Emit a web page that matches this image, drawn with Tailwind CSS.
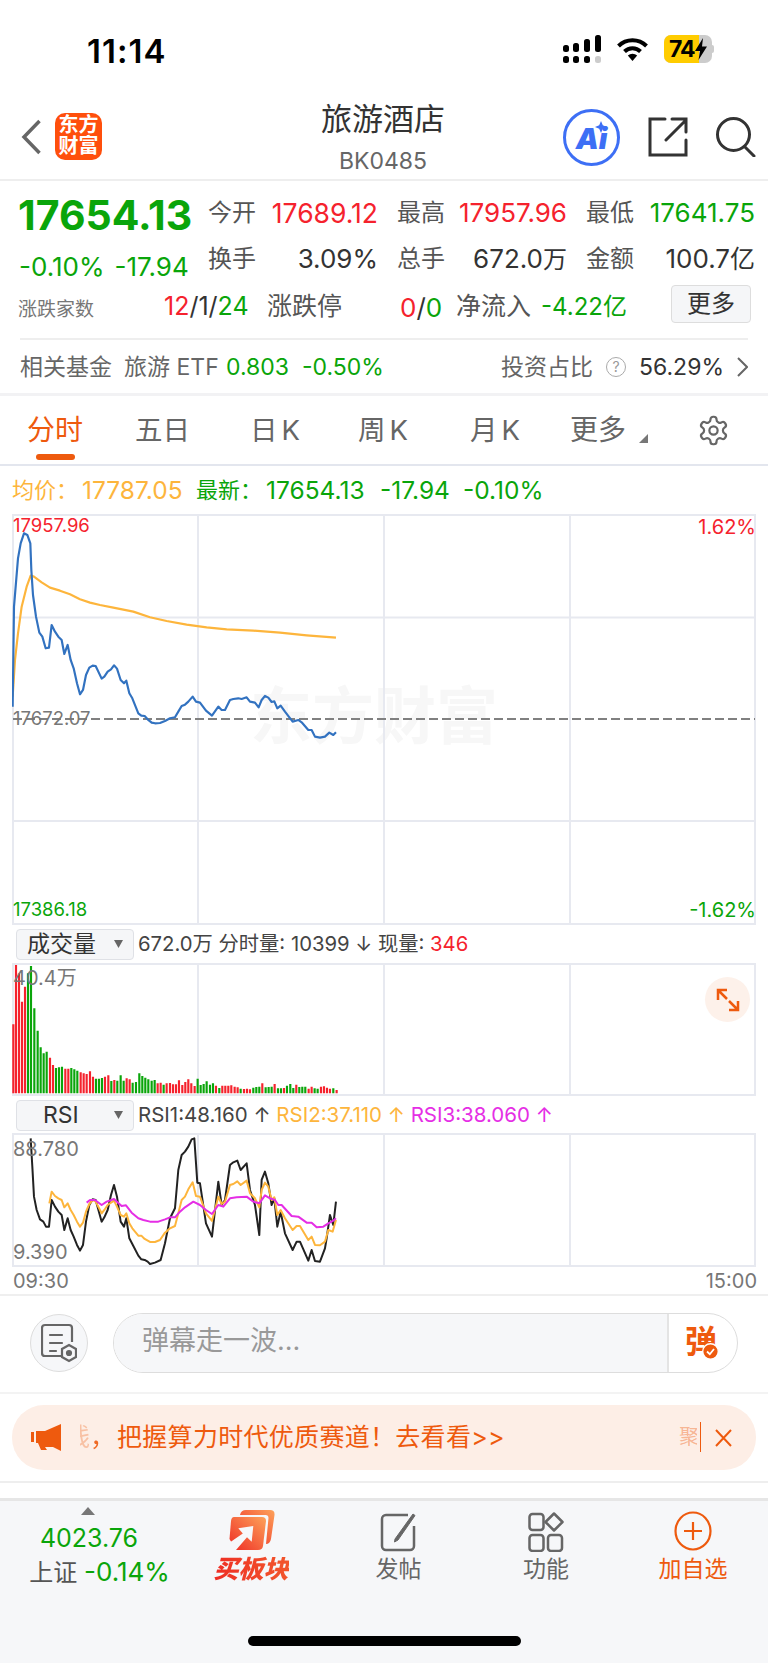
<!DOCTYPE html>
<html lang="zh"><head><meta charset="utf-8"><script src="https://cdn.jsdelivr.net/npm/@tailwindcss/browser@4"></script></head>
<body class="bg-white">
<div class="w-[768px] h-[1663px] overflow-hidden flex flex-col bg-white text-[#333] font-['Inter','Noto_Sans_CJK_SC',sans-serif]">

<!-- status bar -->
<div class="h-[101px] shrink-0 flex items-start pt-[32px] pl-[87px] pr-[54px] justify-between">
  <span class="text-[33px] leading-[38px] font-semibold text-black tracking-[1px]">11:14</span>
  <div class="flex items-center gap-[15px] pt-[5px] h-[28px]">
    <svg width="38" height="28" viewBox="0 0 38 28" fill="#000"><rect x="0" y="10" width="6" height="7" rx="2.5"/><rect x="0" y="21" width="6" height="7" rx="2.5"/><rect x="10" y="8" width="6" height="9" rx="2.5"/><rect x="10" y="21" width="6" height="7" rx="2.5"/><rect x="21" y="4" width="6" height="13" rx="2.5"/><rect x="21" y="21" width="6" height="7" rx="2.5"/><rect x="32" y="0" width="6" height="17" rx="2.5"/><rect x="32" y="21" width="6" height="7" rx="2.5" fill="#ccc"/></svg>
    <svg width="33" height="24" viewBox="0 0 33 24" fill="none" stroke="#000" stroke-width="4"><path d="M2.5 9A20 20 0 0 1 30.5 9"/><path d="M8.5 14.5A11.500 11.500 0 0 1 24.500 14.500"/><path d="M16.500 24L11.800 18.500A7 7 0 0 1 21.200 18.500Z" fill="#000" stroke="none"/></svg>
    <div class="relative w-[50px] h-[28px]">
      <div class="absolute inset-y-0 left-0 w-[48px] rounded-[7px] bg-[#ccc] overflow-hidden"><div class="h-full w-[35px] bg-[#ffcc00]"></div></div>
      <div class="absolute right-0 top-[10px] w-[2px] h-[8px] rounded-r-full bg-[#ccc]"></div>
      <span class="absolute left-[5px] top-0 text-[23px] leading-[28px] font-bold text-black tracking-[-1px]">74</span>
      <svg class="absolute left-[30px] top-[3px]" width="14" height="22" viewBox="0 0 14 22"><path d="M9 0L1 13H6L4.500 22L13 8.500H8Z" fill="#000"/></svg>
    </div>
  </div>
</div>

<!-- nav -->
<div class="relative h-[80px] shrink-0 flex items-center border-b-2 border-[#eeeeee]">
  <svg class="ml-[21px] mt-[-6px]" width="20" height="36" viewBox="0 0 20 36" fill="none" stroke="#666" stroke-width="3.500"><path d="M18.500 2L3 18L18.500 34"/></svg>
  <div class="ml-[14px] mt-[-8px] w-[47px] h-[47px] rounded-[10px] bg-[#ff4f0c] text-white text-[20px] leading-[21px] font-bold text-center pt-[2px]">东方<br>财富</div>
  <div class="absolute left-[302px] top-0 w-[162px] text-center text-[31px] leading-[36px] text-[#333]">旅游酒店</div>
  <div class="absolute left-[302px] top-[47px] w-[162px] text-center text-[23px] leading-[26px] text-[#666]">BK0485</div>
  <div class="ml-auto mr-[12px] flex items-center gap-[28px] mt-[-6px]">
    <div class="relative w-[57px] h-[57px] rounded-full border-[3px] border-[#3d6ff5] flex items-center justify-center text-[29px] font-black text-[#3d6ff5] leading-none italic pt-[3px]">Ai<svg class="absolute right-[10px] top-[9px]" width="12" height="12" viewBox="0 0 10 10"><path d="M5 0L6.500 3.500L10 5L6.500 6.500L5 10L3.500 6.500L0 5L3.500 3.500Z" fill="#3d6ff5"/></svg></div>
    <svg width="40" height="40" viewBox="0 0 40 40" fill="none" stroke="#333" stroke-width="3" stroke-linecap="round"><path d="M17 2H2V38H38V23"/><path d="M18 23L38 3M24 2H38V15"/></svg>
    <svg width="40" height="40" viewBox="0 0 40 40" fill="none" stroke="#333" stroke-width="3" stroke-linecap="round"><circle cx="17.500" cy="17.500" r="16"/><path d="M29 30L38 39"/></svg>
  </div>
</div>

<!-- quote -->
<div class="h-[215px] shrink-0 relative flex flex-col border-b-[3px] border-[#f2f2f4]">
  <div class="flex pl-[18px] h-[60px]">
    <div class="w-[190px] text-[41px] leading-[68px] font-bold text-[#0aa50a]">17654.13</div>
    <div class="flex gap-[19px] text-[24px] leading-[64px]">
      <div class="w-[170px] flex justify-between"><span class="text-[#555]">今开</span><span class="text-[26.500px] text-[#f5222d]">17689.12</span></div>
      <div class="w-[170px] flex justify-between"><span class="text-[#555]">最高</span><span class="text-[26px] text-[#f5222d]">17957.96</span></div>
      <div class="w-[169px] flex justify-between"><span class="text-[#555]">最低</span><span class="text-[26px] text-[#0aa50a]">17641.75</span></div>
    </div>
  </div>
  <div class="flex pl-[19px] h-[46px] items-start">
    <div class="w-[189px] flex gap-[10px] text-[26px] leading-[52px] text-[#0aa50a]"><span>-0.10%</span><span>-17.94</span></div>
    <div class="flex gap-[19px] text-[24px] leading-[36px]">
      <div class="w-[170px] flex justify-between"><span class="text-[#555]">换手</span><span class="text-[26px]">3.09%</span></div>
      <div class="w-[170px] flex justify-between"><span class="text-[#555]">总手</span><span class="text-[26px]">672.0<span class="text-[24px]">万</span></span></div>
      <div class="w-[169px] flex justify-between"><span class="text-[#555]">金额</span><span class="text-[26px]">100.7<span class="text-[25px]">亿</span></span></div>
    </div>
  </div>
  <div class="relative flex items-center pl-[18px] h-[40px] text-[25px] text-[#555]">
    <span class="w-[146px] text-[19px] pt-[6px] text-[#777]">涨跌家数</span>
    <span class="w-[103px] text-[25px]"><span class="text-[#f5222d]">12</span><span class="text-[#333]">/1/</span><span class="text-[#0aa50a]">24</span></span>
    <span class="w-[133px]">涨跌停</span>
    <span class="w-[56px] text-[26px]"><span class="text-[#f5222d]">0</span><span class="text-[#333]">/</span><span class="text-[#0aa50a]">0</span></span>
    <span class="w-[85px]">净流入</span>
    <span class="text-[#0aa50a] text-[24px]">-4.22亿</span>
    <div class="absolute left-[671px] top-[-2px] w-[80px] h-[38px] bg-[#f5f6f8] border border-[#dddddd] rounded-[4px] text-center text-[#333] text-[24px] leading-[36px]">更多</div>
  </div>
  <div class="h-[2px] mx-[20px] mt-[11px] bg-[#eeeeee] shrink-0"></div>
  <div class="flex items-center pl-[20px] pr-[20px] flex-1 text-[23px] text-[#666] pt-[1px]">
    <span class="w-[104px]">相关基金</span><span class="w-[102px]">旅游 ETF</span>
    <span class="w-[76px] text-[#0aa50a]">0.803</span><span class="text-[#0aa50a]">-0.50%</span>
    <span class="ml-auto">投资占比</span>
    <span class="ml-[13px] w-[20px] h-[20px] rounded-full border border-[#aaa] text-[14px] leading-[18px] text-center text-[#999]">?</span>
    <span class="ml-[13px] text-[#333]">56.29%</span>
    <svg class="ml-[13px]" width="11" height="20" viewBox="0 0 11 20" fill="none" stroke="#666" stroke-width="2"><path d="M1 1L10 10L1 19"/></svg>
  </div>
</div>

<!-- tabs -->
<div class="relative h-[70px] shrink-0 border-b-2 border-[#e3e6ee] text-[27.500px] text-[#666] leading-[68px]">
  <div class="flex h-[68px]">
    <span class="w-[135px] pl-[27px] text-[#ee5a0e] text-[28px]">分时</span>
    <span class="w-[115px]">五日</span>
    <span class="w-[108px] tracking-[4px]">日K</span>
    <span class="w-[112px] tracking-[4px]">周K</span>
    <span class="w-[100px] tracking-[4px]">月K</span>
    <span class="w-[70px] text-[28px]">更多</span>
  </div>
  <div class="absolute left-[36px] top-[58px] w-[39px] h-[6px] rounded-full bg-[#ee5a0e]"></div>
  <svg class="absolute left-[638px] top-[37px]" width="10" height="10" viewBox="0 0 10 10"><path d="M10 1V10H1Z" fill="#777"/></svg>
  <svg class="absolute left-[697px] top-[18px]" width="33" height="33" viewBox="0 0 24 24" fill="none" stroke="#666" stroke-width="1.600" stroke-linejoin="round"><path d="M12.220 2h-.44a2 2 0 0 0-2 2v.18a2 2 0 0 1-1 1.730l-.43.25a2 2 0 0 1-2 0l-.15-.08a2 2 0 0 0-2.730.73l-.22.38a2 2 0 0 0 .73 2.730l.15.1a2 2 0 0 1 1 1.720v.51a2 2 0 0 1-1 1.740l-.15.09a2 2 0 0 0-.73 2.730l.22.38a2 2 0 0 0 2.730.73l.15-.08a2 2 0 0 1 2 0l.43.25a2 2 0 0 1 1 1.730V20a2 2 0 0 0 2 2h.44a2 2 0 0 0 2-2v-.18a2 2 0 0 1 1-1.730l.43-.25a2 2 0 0 1 2 0l.15.08a2 2 0 0 0 2.730-.73l.22-.39a2 2 0 0 0-.73-2.730l-.15-.08a2 2 0 0 1-1-1.740v-.5a2 2 0 0 1 1-1.740l.15-.09a2 2 0 0 0 .73-2.730l-.22-.38a2 2 0 0 0-2.730-.73l-.15.08a2 2 0 0 1-2 0l-.43-.25a2 2 0 0 1-1-1.730V4a2 2 0 0 0-2-2z"/><circle cx="12" cy="12" r="3"/></svg>
</div>

<!-- info line -->
<div class="h-[48px] shrink-0 flex items-center pl-[12px] text-[24.500px] pt-[1px]">
  <span class="w-[70px] text-[22px] text-[#fdb53c]">均价：</span><span class="w-[114px] text-[#fdb53c]">17787.05</span>
  <span class="w-[70px] text-[22px] text-[#0aa50a]">最新：</span><span class="w-[114px] text-[#0aa50a]">17654.13</span>
  <span class="w-[83px] text-[#0aa50a]">-17.94</span><span class="text-[#0aa50a]">-0.10%</span>
</div>

<!-- main chart -->
<div class="relative h-[411px] shrink-0 ml-[12px] w-[744px] text-[18.500px] leading-[22px]">
  <div class="absolute left-[238px] top-[167px] text-[62px] leading-[72px] font-bold text-[#f7f7f7] whitespace-nowrap">东方财富</div>
  <svg class="absolute inset-0" width="744" height="411" viewBox="12 514 744 411" fill="none">
    <g stroke="#e7e9f0" stroke-width="2"><rect x="13" y="515" width="742" height="409"/><path d="M198 515V924M384 515V924M570 515V924M13 617.500H755M13 821H755"/></g>
    <path d="M13 719H755" stroke="#808080" stroke-width="2" stroke-dasharray="9 4"/>
    <g transform="translate(0 400) scale(0.3333)" stroke-width="6.500" stroke-linejoin="round">
      <polyline stroke="#fdb53c" points="38,890 45,780 54,700 65,620 80,560 92,527 102,530 125,547 150,563 180,572 210,583 240,598 270,608 300,615 340,623 400,635 450,652 500,663 560,674 620,682 680,688 760,692 840,698 920,706 1008,713"/>
      <polyline stroke="#3272c0" points="38,920 42,620 54,475 62,430 72,400 82,405 91,430 94,510 99,585 108,650 118,698 127,710 137,745 147,743 155,675 165,695 175,710 185,720 193,762 203,735 212,780 221,805 231,850 240,883 249,870 258,825 268,803 278,797 287,798 305,836 313,830 323,815 333,808 342,796 351,806 362,840 372,850 379,842 388,880 397,895 415,940 424,947 434,948 443,958 455,968 465,970 480,969 495,963 510,955 525,952 535,935 545,918 555,914 565,905 578,890 588,905 600,908 618,932 636,947 655,920 665,930 675,930 690,900 700,897 715,895 725,897 740,892 750,905 765,908 776,922 785,900 795,888 805,893 815,906 823,904 832,925 842,917 855,935 878,965 895,960 905,967 925,990 935,990 945,1010 960,1013 975,1010 988,998 1000,1005 1008,997"/>
    </g>
  </svg>
  <span class="absolute left-[1px] top-0 text-[#f5222d]">17957.96</span>
  <span class="absolute left-[1px] top-[193px] text-[#777]">17672.07</span>
  <span class="absolute left-[1px] top-[384px] text-[#0aa50a]">17386.18</span>
  <span class="absolute right-0 top-[2px] text-[20px] text-[#f5222d]">1.62%</span>
  <span class="absolute right-0 top-[385px] text-[20px] text-[#0aa50a]">-1.62%</span>
</div>

<!-- volume header -->
<div class="h-[38px] shrink-0 flex items-center pl-[16px] text-[20.300px] text-[#444]">
  <div class="relative w-[118px] h-[31px] bg-[#f5f6f8] border border-[#dfe1e6] rounded-[4px] text-[23px] leading-[29px] pl-[10px] mr-[4px] text-[#333]">成交量<svg class="absolute right-[10px] top-[10px]" width="9" height="8" viewBox="0 0 9 8"><path d="M0 0H9L4.500 8Z" fill="#666"/></svg></div>
  <span class="whitespace-nowrap">672.0万 分时量: 10399 ↓ 现量: <span class="text-[#f5222d]">346</span></span>
</div>

<!-- volume chart -->
<div class="relative h-[134px] shrink-0 ml-[12px] w-[744px]">
  <svg class="absolute inset-0" width="744" height="134" viewBox="12 963 744 134" fill="none">
    <g stroke="#e7e9f0" stroke-width="2"><rect x="13" y="964" width="742" height="131"/><path d="M198 964V1095M384 964V1095M570 964V1095"/></g>
    <g transform="translate(0 910) scale(0.3333)" stroke-width="6.500">
      <path stroke="#f5222d" d="M40 550V343M48 550V165M57 550V190M66 550V275M75 550V230M150 550V443M159 550V465M196 550V476M205 550V476M242 550V487M251 550V490M260 550V492M270 550V484M279 550V500M315 550V500M325 550V496M343 550V510M380 550V505M389 550V508M473 550V520M482 550V518M500 550V520M510 550V519M519 550V523M528 550V523M537 550V511M547 550V525M556 550V516M565 550V508M574 550V520M584 550V528M648 550V527M667 550V527M676 550V527M685 550V527M694 550V526M704 550V530M713 550V532M732 550V537M741 550V536M750 550V538M787 550V520M824 550V522M852 550V534M889 550V524M926 550V536M935 550V530M963 550V530M972 550V529M981 550V533M990 550V536M1010 550V540"/>
      <path stroke="#0aa50a" d="M84 550V190M93 550V168M103 550V295M113 550V362M122 550V412M131 550V430M140 550V425M168 550V474M177 550V472M186 550V470M214 550V474M223 550V478M232 550V482M288 550V506M297 550V506M306 550V504M334 550V513M352 550V512M362 550V496M371 550V512M398 550V518M408 550V516M418 550V490M427 550V498M436 550V503M445 550V508M455 550V512M464 550V510M491 550V524M593 550V506M602 550V525M611 550V522M620 550V514M630 550V524M639 550V520M658 550V534M722 550V536M760 550V533M769 550V531M778 550V530M797 550V532M806 550V531M815 550V530M834 550V535M843 550V535M861 550V527M871 550V522M880 550V534M898 550V531M907 550V530M916 550V530M944 550V535M953 550V536M1000 550V535"/>
    </g>
  </svg>
  <span class="absolute left-[1px] top-[3px] text-[20px] leading-[24px] text-[#777]">40.4万</span>
  <div class="absolute left-[693px] top-[14px] w-[45px] h-[45px] rounded-full bg-[#fdf1ea] flex items-center justify-center">
    <svg width="24" height="24" viewBox="0 0 24 24" fill="none" stroke="#ee5a0e" stroke-width="2.500"><path d="M2 12V2H11M2 2L11 11M22 13V22H13M22 22L13 13"/></svg>
  </div>
</div>

<!-- rsi header -->
<div class="h-[36px] shrink-0 flex items-center pl-[16px] text-[20.500px] text-[#444]">
  <div class="relative w-[118px] h-[31px] bg-[#f5f6f8] border border-[#dfe1e6] rounded-[4px] text-[23px] leading-[29px] pl-[26px] mr-[4px] text-[#333]">RSI<svg class="absolute right-[10px] top-[10px]" width="9" height="8" viewBox="0 0 9 8"><path d="M0 0H9L4.500 8Z" fill="#666"/></svg></div>
  <span class="whitespace-nowrap">RSI1:48.160 ↑ <span class="text-[#fdb53c]">RSI2:37.110 ↑</span> <span class="text-[#e52ee5]">RSI3:38.060 ↑</span></span>
</div>

<!-- rsi chart -->
<div class="relative h-[134px] shrink-0 ml-[12px] w-[744px] text-[20px] leading-[24px] text-[#777]">
  <svg class="absolute inset-0" width="744" height="134" viewBox="12 1133 744 134" fill="none">
    <g stroke="#e7e9f0" stroke-width="2"><rect x="13" y="1134" width="742" height="132"/><path d="M198 1134V1266M384 1134V1266M570 1134V1266"/></g>
    <g transform="translate(0 1090) scale(0.3333)" stroke-width="6" stroke-linejoin="round">
      <polyline stroke="#222" points="92,145 97,230 102,320 110,360 120,388 130,395 138,410 147,410 155,330 165,350 175,365 185,375 193,420 203,385 212,420 221,440 231,465 240,482 249,465 258,395 268,345 278,328 287,330 305,395 313,382 323,360 333,315 342,285 351,320 362,395 372,410 379,385 388,445 397,462 415,497 424,508 434,510 443,515 450,522 465,518 482,510 495,460 510,385 525,355 535,240 545,195 555,185 565,170 575,148 583,145 592,278 600,280 618,400 636,440 655,275 665,345 675,330 690,225 700,217 712,212 722,240 740,220 750,300 765,345 778,435 785,270 795,245 805,280 815,345 823,325 832,410 842,365 855,430 878,480 890,455 900,455 925,512 935,480 945,513 960,515 975,475 980,445 990,375 1000,405 1008,335"/>
      <polyline stroke="#fdb53c" points="148,340 155,305 165,318 175,325 185,330 193,352 203,340 212,360 221,375 231,395 240,410 249,398 258,365 268,342 278,330 287,335 305,370 313,360 323,345 342,332 351,350 362,375 372,380 379,370 388,400 397,415 415,437 424,437 434,447 450,456 465,456 480,450 495,428 510,415 525,408 535,370 545,330 555,320 565,298 578,277 588,318 600,320 618,370 636,393 655,320 665,342 675,335 690,285 700,282 712,274 722,285 740,272 750,310 765,325 778,352 785,300 795,278 805,290 815,330 823,322 832,375 842,360 855,385 878,420 890,408 900,408 925,450 935,440 945,465 960,466 975,455 985,420 998,425 1008,390"/>
      <polyline stroke="#e52ee5" points="260,338 270,330 285,330 305,345 320,335 342,327 351,335 365,348 378,346 395,368 415,385 430,390 450,395 475,395 495,388 510,382 525,382 540,365 555,352 580,335 600,345 618,360 636,372 655,345 670,350 690,325 710,322 740,320 760,335 778,340 795,316 810,325 825,330 835,345 845,345 875,378 895,380 920,398 935,398 950,412 970,410 985,400 1000,392 1008,385"/>
    </g>
  </svg>
  <span class="absolute left-[1px] top-[4px]">88.780</span>
  <span class="absolute left-[1px] top-[107px]">9.390</span>
</div>

<!-- time axis -->
<div class="h-[29px] shrink-0 flex justify-between items-center pl-[13px] pr-[11px] text-[20px] text-[#777] border-b-2 border-[#efefef]">
  <span>09:30</span><span>15:00</span>
</div>

<!-- comment -->
<div class="h-[98px] shrink-0 flex items-center pl-[30px] pr-[30px] pb-[2px] gap-[25px] border-b-2 border-[#f3f3f3]">
  <div class="w-[58px] h-[58px] rounded-full bg-[#f6f7f9] border border-[#dddddd] flex items-center justify-center shrink-0">
    <svg width="36" height="40" viewBox="0 0 36 40" fill="none" stroke="#666" stroke-width="2.200"><path d="M20 33H4A3 3 0 0 1 1 30V5A3 3 0 0 1 4 2H28A3 3 0 0 1 31 5V19"/><path d="M9 12H21M9 20H21M9 28H15" stroke-linecap="round"/><path d="M28 22L35 26V34L28 38L21 34V26Z"/><circle cx="28" cy="30" r="2" fill="#666"/></svg>
  </div>
  <div class="flex-1 h-[60px] rounded-full border border-[#dddddd] flex overflow-hidden">
    <div class="flex-1 bg-[#f6f7f9] pl-[28px] text-[27px] leading-[54px] text-[#999]">弹幕走一波...</div>
    <div class="relative w-[70px] border-l-2 border-[#e4e4e4] pl-[16px] text-[32px] leading-[56px] font-bold text-[#ee5a0e]">弹<svg class="absolute left-[33px] top-[29px]" width="17" height="17" viewBox="0 0 17 17"><circle cx="8.500" cy="8.500" r="7.800" fill="#ee5a0e" stroke="#fff" stroke-width="1.400"/><path d="M5 8.500L7.800 11.200L12 6" fill="none" stroke="#fff" stroke-width="1.800"/></svg></div>
  </div>
</div>

<!-- banner -->
<div class="h-[89px] shrink-0 px-[12px] pt-[11px] border-b-2 border-[#eeeeee]">
  <div class="relative h-[65px] rounded-[32px] bg-[#fdeee6] flex items-center overflow-hidden text-[25px] text-[#ee5a0e] whitespace-nowrap">
    <svg class="ml-[19px]" width="31" height="27" viewBox="0 0 31 27"><rect x="0" y="8" width="3" height="10" fill="#ee5a0e"/><path d="M5 7H14L30 0V27L22 23H14L16 26H10L7 19H5Z" fill="#ee5a0e"/></svg>
    <span class="ml-[18px] w-[10px] overflow-hidden opacity-30 flex justify-end"><span class="shrink-0">线</span></span><span class="opacity-90">，</span><span class="ml-[2px] tracking-[0.3px]">把握算力时代优质赛道！去看看&gt;&gt;</span>
    <span class="absolute left-[667px] top-[17px] w-[18px] overflow-hidden text-[#ee5a0e]/40 text-[20px]">聚</span>
    <span class="absolute left-[688px] top-[17px] w-px h-[30px] bg-[#ee5a0e]"></span>
    <svg class="absolute left-[703px] top-[24px]" width="17" height="18" viewBox="0 0 17 18" fill="none" stroke="#ee5a0e" stroke-width="2"><path d="M1 1L16 17M16 1L1 17"/></svg>
  </div>
</div>
<div class="h-[15px] shrink-0"></div>

<!-- bottom bar -->
<div class="relative flex-1 bg-[#f6f7f9] border-t-[3px] border-[#e6e6e6]">
  <div class="grid grid-cols-[176px_152px_141px_154px_140px] h-[100px]">
    <div class="flex flex-col items-center pt-[6px]">
      <svg width="14" height="8" viewBox="0 0 14 8"><path d="M7 0L14 8H0Z" fill="#777"/></svg>
      <span class="text-[25px] leading-[32px] text-[#0aa50a] mt-[7px] ml-[2px]">4023.76</span>
      <span class="text-[24px] leading-[36px] text-[#555] whitespace-nowrap ml-[23px]">上证 <span class="text-[26px] text-[#0aa50a]">-0.14%</span></span>
    </div>
    <div class="flex flex-col items-center pt-[8px]">
      <svg width="48" height="43" viewBox="0 0 48 43"><defs><linearGradient id="g" x1="0" y1="1" x2="1" y2="0"><stop offset="0" stop-color="#ee2b24"/><stop offset="1" stop-color="#fda25a"/></linearGradient></defs><path d="M12 6Q13 1 18 1H42Q47 1 46.500 6L43 30Q42 35 38 35L40.500 9Q40.500 6 37.500 6Z" fill="url(#g)"/><path d="M6 8H34Q38 8 38 12L35 37Q34.500 41 30 41H8L1.500 30L3 12Q3.500 8 6 8Z" fill="url(#g)"/><path d="M10.300 19.300L25.300 17L23.700 32.700L19 28.300L8 41H1V34L14.800 24.500Z" fill="#f6f7f9"/></svg>
      <span class="text-[25px] leading-[32px] mt-[1px] mr-[2px] font-black italic whitespace-nowrap bg-linear-to-r from-[#ee2b24] to-[#f2552c] bg-clip-text text-transparent">买板块</span>
    </div>
    <div class="flex flex-col items-center pt-[11px]">
      <svg width="38" height="40" viewBox="0 0 38 40" fill="none" stroke="#666" stroke-width="2.500"><path d="M28 3H6A4 4 0 0 0 2 7V34A4 4 0 0 0 6 38H30A4 4 0 0 0 34 34V14"/><path d="M15 27L33 2L35 3.500L18 28L14.500 30Z" fill="#666" stroke-width="1"/></svg>
      <span class="text-[23px] leading-[32px] mt-[1px] text-[#666]">发帖</span>
    </div>
    <div class="flex flex-col items-center pt-[11px]">
      <svg width="36" height="40" viewBox="0 0 36 40" fill="none" stroke="#666" stroke-width="2.500"><rect x="1.500" y="2" width="14" height="16" rx="3"/><path d="M26 1.500L34.500 10L26 18.500L17.500 10Z" stroke-linejoin="round"/><rect x="1.500" y="23" width="14" height="16" rx="3"/><rect x="20" y="23" width="14" height="16" rx="3"/></svg>
      <span class="text-[23px] leading-[32px] mt-[1px] text-[#666]">功能</span>
    </div>
    <div class="flex flex-col items-center pt-[10px]">
      <svg width="38" height="40" viewBox="0 0 38 40" fill="none" stroke="#ee5a0e" stroke-width="2.200"><ellipse cx="19" cy="20" rx="17.500" ry="18.500"/><path d="M19 11V29M10 20H28"/></svg>
      <span class="text-[23px] leading-[32px] mt-[2px] text-[#ee5a0e] whitespace-nowrap">加自选</span>
    </div>
  </div>
  <div class="absolute left-[248px] top-[135px] w-[273px] h-[10px] rounded-full bg-black"></div>
</div>
</div>
</body></html>
